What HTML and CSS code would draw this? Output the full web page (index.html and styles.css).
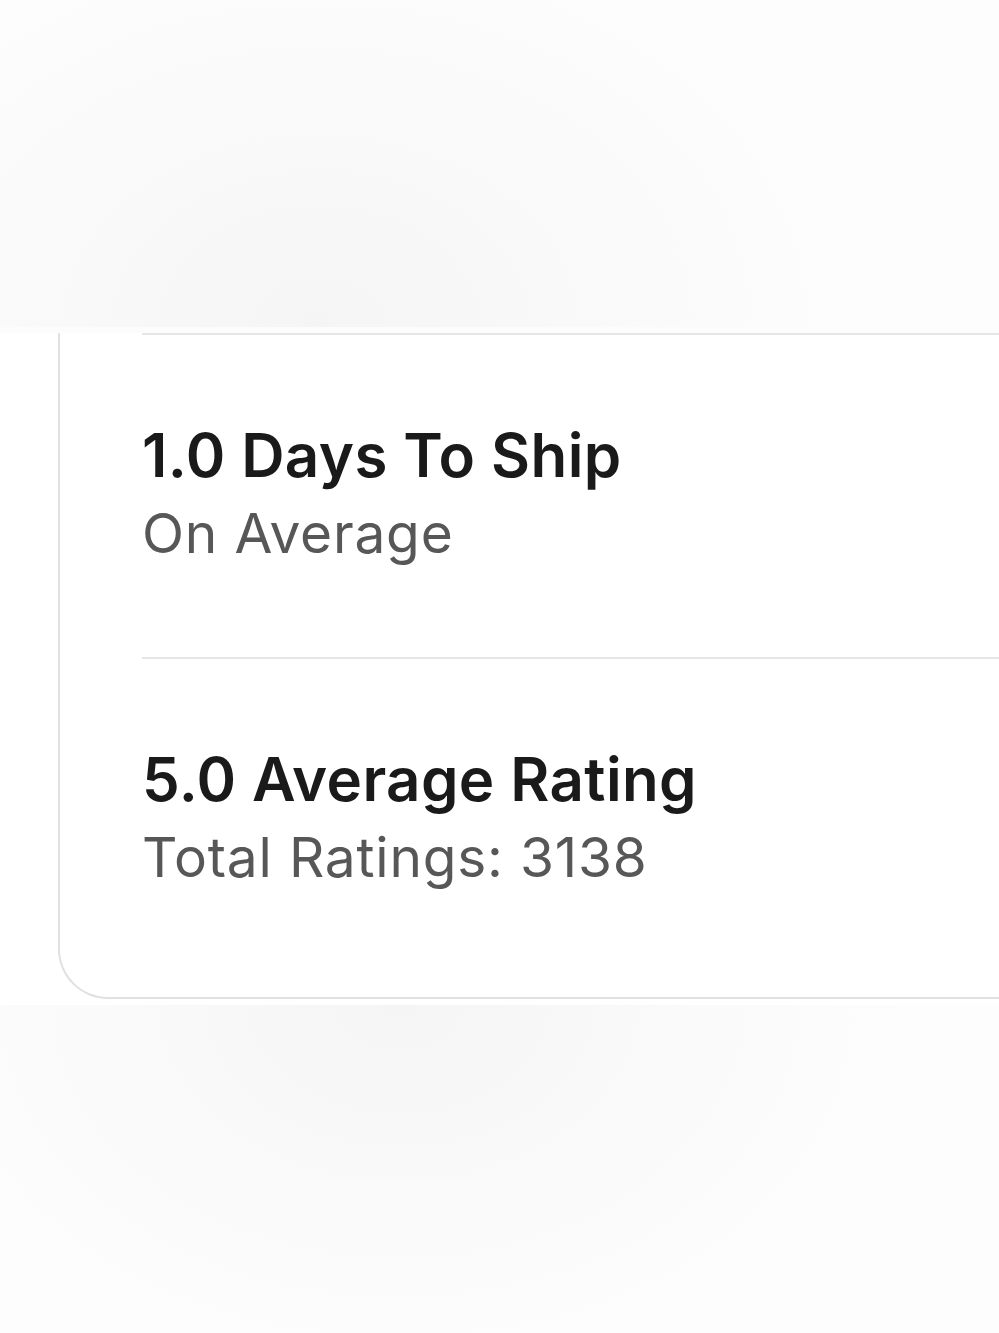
FILE: index.html
```html
<!DOCTYPE html>
<html>
<head>
<meta charset="utf-8">
	<title>Shop stats</title>
	<link rel="stylesheet" href="styles.css">
</head>
<body>
<div class="shade shade-top"></div>
<div class="band">
	<div class="card">
		<div class="stat">
			<h2 class="stat-title">1.0 Days To Ship</h2>
			<p class="stat-sub">On Average</p>
		</div>
		<div class="stat">
			<h2 class="stat-title">5.0 Average Rating</h2>
			<p class="stat-sub">Total Ratings: 3138</p>
		</div>
	</div>
</div>
<div class="shade shade-bottom"></div>
</body>
</html>
```

FILE: styles.css
```css
*{
	margin: 0;
	padding: 0;
	box-sizing: border-box;
}
html,body{
	width: 100%;
	height: 100%;
}
body{
	font-family: Inter, "Noto Sans", "Liberation Sans", sans-serif;
	background: #fcfcfc;
	overflow: hidden;
}
.shade{
	width: 100%;
}
.shade-top{
	height: 327px;
	background: radial-gradient(ellipse 560px 420px at 32% 100%, #f5f5f5 0%, #f9f9f9 45%, #fdfdfd 100%);
}
.shade-bottom{
	height: 333px;
	background: radial-gradient(ellipse 520px 380px at 40% 0%, #f5f5f5 0%, #f9f9f9 45%, #fdfdfd 100%);
}
.band{
	background: #fff;
	padding: 0 0 6px 58px;
}
.card{
	border: 2px solid #e1e1e1;
	border-top: none;
	border-right: none;
	border-bottom-left-radius: 50px;
	padding: 0 0 0 82px;
}
.stat{
	border-top: 2px solid #e6e6e6;
	display: flex;
	flex-direction: column;
}
.stat:first-child{
	margin-top: 6px;
	padding: 80px 0 86px;
}
.stat:last-child{
	padding: 80px 0 102px;
}
.stat-title{
	font-size: 60px;
	font-weight: 600;
	color: #1a1a1a;
	line-height: 80px;
	letter-spacing: 0.4px;
}
.stat-sub{
	font-size: 55px;
	font-weight: 400;
	color: #575757;
	line-height: 76px;
	letter-spacing: 0.8px;
}
```
